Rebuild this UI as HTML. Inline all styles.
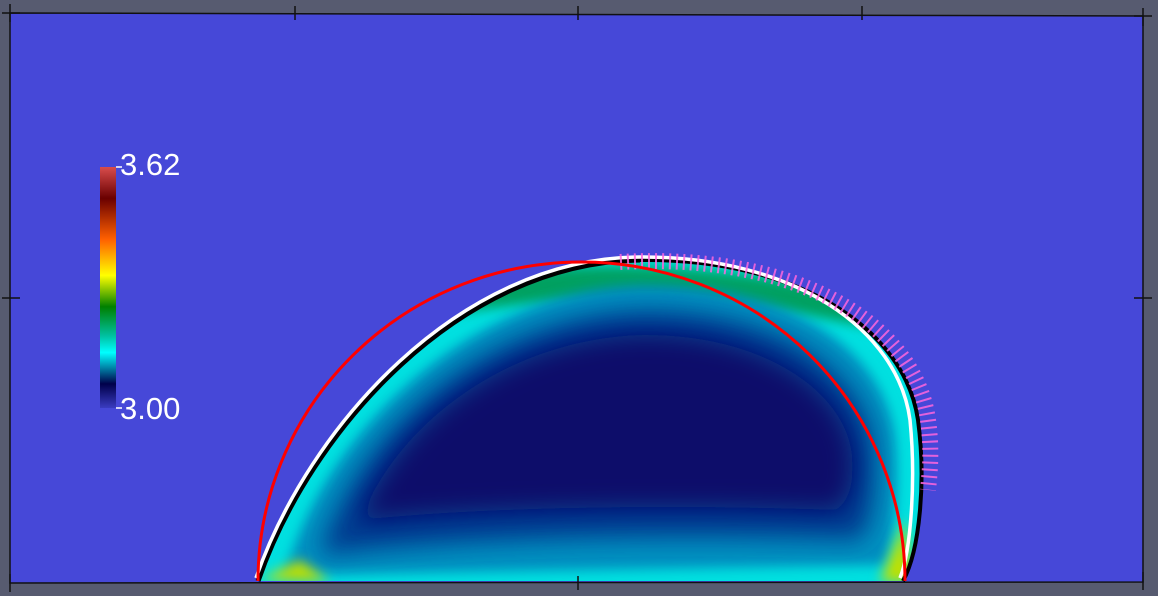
<!DOCTYPE html>
<html><head><meta charset="utf-8"><style>
html,body{margin:0;padding:0;background:#575b70;}
body{width:1158px;height:596px;overflow:hidden;position:relative;font-family:"Liberation Sans",sans-serif;}
.lbl{position:absolute;color:#fff;font-size:31px;line-height:1;}
</style></head><body>
<svg width="1158" height="596" style="position:absolute;left:0;top:0">
<defs>
<linearGradient id="cb" x1="0" y1="0" x2="0" y2="1">
<stop offset="0" stop-color="#d84c4c"/>
<stop offset="0.13" stop-color="#6a0000"/>
<stop offset="0.3" stop-color="#ff6000"/>
<stop offset="0.45" stop-color="#ffff00"/>
<stop offset="0.58" stop-color="#008000"/>
<stop offset="0.7" stop-color="#00c0a0"/>
<stop offset="0.77" stop-color="#00ffff"/>
<stop offset="0.9" stop-color="#00004a"/>
<stop offset="1" stop-color="#3a3cc0"/>
</linearGradient>
<filter id="bl" x="-20%" y="-20%" width="140%" height="140%"><feGaussianBlur stdDeviation="12"/></filter>
<filter id="bl2" x="-20%" y="-20%" width="140%" height="140%"><feGaussianBlur stdDeviation="6"/></filter>
<clipPath id="dc"><path d="M258,581 C310,430 460,262 640,260 C800,258 905,330 918,420 C926,480 920,550 903,581 Z"/></clipPath>
</defs>
<path d="M10,13 L1143,16 L1143,582 L10,583 Z" fill="#4648d8" stroke="#111" stroke-width="1.5"/>
<g clip-path="url(#dc)">
<rect x="250" y="250" width="680" height="340" fill="#00e0e0"/>
<path d="M420,285 Q640,240 880,300 L880,330 Q640,275 420,320Z" fill="#00a060" filter="url(#bl2)"/>
<path d="M285,575 C320,440 470,290 640,285 C790,283 885,350 895,440 C900,510 890,555 885,565 Z" fill="#0090c0" filter="url(#bl2)"/>
<path d="M320,555 C355,430 490,315 640,310 C775,308 868,370 875,450 C878,500 868,530 860,540 C700,535 500,535 320,555 Z" fill="#063a90" filter="url(#bl)"/>
<path d="M360,520 C400,420 510,340 640,335 C760,333 845,390 852,455 C855,490 845,505 835,510 C700,505 500,505 360,520 Z" fill="#0a0f6a" filter="url(#bl)"/>
<path d="M260,580 L300,560 L330,582Z M880,582 L905,520 L912,582Z" fill="#c0e000" filter="url(#bl2)"/>
</g>
<path d="M640,260 C800,258 905,330 918,420 C926,480 920,550 903,581" fill="none" stroke="#000" stroke-width="4"/>
<path d="M258,581 C310,430 460,262 640,260" fill="none" stroke="#000" stroke-width="5"/>
<path d="M256,578 C308,428 458,258 640,257 C795,256 898,330 910,420 C916,480 911,550 900,578" fill="none" stroke="#fff" stroke-width="3.5"/>
<path d="M620,262 C800,252 915,325 928,420 C932,450 930,470 928,490" fill="none" stroke="#ff66dd" stroke-width="16" stroke-dasharray="2 5" opacity="0.85"/>
<path d="M258,581 A323.5,319 0 0 1 905,581" fill="none" stroke="#ff0000" stroke-width="3"/>
<rect x="100" y="167" width="16" height="241" fill="url(#cb)"/>
<line x1="116" y1="167" x2="122" y2="167" stroke="#fff" stroke-width="1.5"/>
<line x1="116" y1="408" x2="122" y2="408" stroke="#fff" stroke-width="1.5"/>
<g stroke="#111" stroke-width="1.5">
<line x1="10" y1="4" x2="10" y2="22"/><line x1="2" y1="13" x2="20" y2="13"/>
<line x1="295" y1="6" x2="295" y2="20"/><line x1="578" y1="6" x2="578" y2="20"/><line x1="862" y1="6" x2="862" y2="20"/>
<line x1="1143" y1="8" x2="1143" y2="26"/><line x1="1134" y1="16" x2="1152" y2="16"/>
<line x1="2" y1="298" x2="20" y2="298"/><line x1="1134" y1="298" x2="1152" y2="298"/>
<line x1="578" y1="576" x2="578" y2="590"/>
<line x1="1143" y1="572" x2="1143" y2="590"/><line x1="10" y1="574" x2="10" y2="592"/>
</g>
</svg>
<div class="lbl" style="left:120px;top:149px">3.62</div>
<div class="lbl" style="left:120px;top:393px">3.00</div>
</body></html>
